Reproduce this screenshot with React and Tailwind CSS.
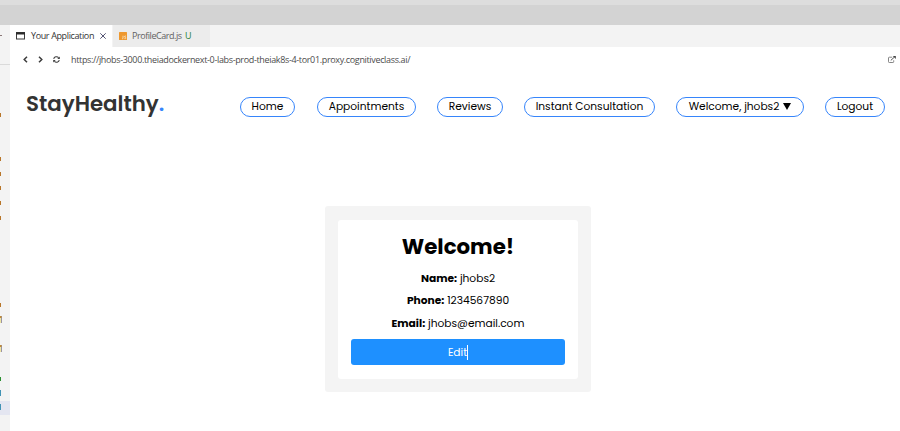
const navItems = [
  { label: 'Home', box: 'w-[55px]' },
  { label: 'Appointments', box: 'w-[99px] ml-[22px]' },
  { label: 'Reviews', box: 'w-[66px] ml-[21px]' },
  { label: 'Instant Consultation', box: 'w-[131px] ml-[21px]' },
  { label: 'Welcome, jhobs2', box: 'w-[128px] ml-[21px]', arrow: true },
  { label: 'Logout', box: 'w-[60px] ml-[21px]' },
];

const treeRows = [
  'dot', '', '', 'dot', 'dot', 'dot', 'dot', 'dot', '', '', '', '', '',
  'dot', 'M', '', 'M', '', 'green', 'U', 'U',
];

function TreeMark({ kind }) {
  if (kind === 'dot') return <i className="block h-[4px] w-[1px] bg-[#b8762a]" />;
  if (kind === 'green') return <i className="block h-[4px] w-[1px] bg-[#2a9030]" />;
  if (kind === 'M')
    return (
      <svg width="2" height="7" className="mb-px block">
        <path d="M.5 1v6" stroke="#eee4a0" />
        <path d="M1.5 0v7" stroke="#9994a5" />
        <path d="M0 1h1.5" stroke="#c08a3a" strokeWidth="2" />
      </svg>
    );
  if (kind === 'U') return <i className="mb-px block h-[6px] w-[1px] bg-[#4293b4]" />;
  return null;
}

function Sidebar() {
  return (
    <aside className="w-[10px] shrink-0 overflow-hidden bg-[#f3f3f3]">
      <div className="flex h-[40px] items-start border-b border-[#dadada] pt-[10px]">
        <i className="block h-px w-[2px] bg-[#8a7777]" />
      </div>
      <div className="pt-[43px]">
        {treeRows.map((kind, i) => (
          <div
            key={i}
            className={`flex h-[14.63px] items-center ${i === treeRows.length - 1 ? 'bg-[#e4e6f1]' : ''}`}
          >
            <TreeMark kind={kind} />
          </div>
        ))}
      </div>
    </aside>
  );
}

function Tabs() {
  return (
    <div className="flex h-[22px] bg-[#f3f3f3] text-[9px] leading-[22px]">
      <div className="flex w-[102px] items-center bg-white pl-[6px] text-[#333]">
        <svg width="9" height="8" viewBox="0 0 9 8" className="shrink-0">
          <rect x=".5" y=".5" width="8" height="6.5" fill="#fff" stroke="#3b3b3b" />
          <path d="M0 1.5h9" stroke="#2c2c2c" strokeWidth="2" />
        </svg>
        <span className="ml-[6px] w-[63px] whitespace-nowrap tracking-[-0.37px]">Your Application</span>
        <svg width="6" height="6" viewBox="0 0 6 6" className="ml-[6px] shrink-0">
          <path d="M.3.3l5.4 5.4M5.7.3L.3 5.7" stroke="#424264" strokeWidth=".9" />
        </svg>
      </div>
      <div className="ml-px flex w-[97px] items-center bg-[#ececec] pl-[6px] text-[#616161]">
        <svg width="8" height="8" viewBox="0 0 8 8" className="shrink-0">
          <rect width="8" height="8" rx=".5" fill="#ee982f" />
          <path d="M4 3.7v2.4q0 .8-.9.8M7 4.1q-1.5-.4-1.5.5 0 .6.8.7.8.2.6.9-.2.8-1.5.4" fill="none" stroke="#fff1d8" strokeWidth=".7" />
        </svg>
        <span className="ml-[5px] w-[50px] whitespace-nowrap tracking-[-0.45px]">ProfileCard.js</span>
        <span className="ml-[3px] text-[#278038]">U</span>
      </div>
    </div>
  );
}

function AddressBar() {
  return (
    <div className="flex h-[25px] items-center pr-[4px] pl-[13px] text-[#3c3c3c]">
      <svg width="5" height="7" viewBox="0 0 5 7">
        <path d="M4 .7L1.2 3.5 4 6.3" fill="none" stroke="currentColor" strokeWidth="1.5" />
      </svg>
      <svg width="5" height="7" viewBox="0 0 5 7" className="ml-[10px]">
        <path d="M1 .7l2.8 2.8L1 6.3" fill="none" stroke="currentColor" strokeWidth="1.5" />
      </svg>
      <svg width="7" height="7" viewBox="0 0 7 7" className="ml-[10px]">
        <path d="M.7 2.8A2.8 2.6 0 015.6 1.7M6.3 4.2A2.8 2.6 0 011.4 5.3" fill="none" stroke="currentColor" strokeWidth="1.1" />
        <path d="M6.8.4v2.5H4.3zM.2 6.6V4.1h2.5z" fill="currentColor" />
      </svg>
      <span className="ml-[11px] whitespace-nowrap text-[9px] tracking-[-0.345px] text-[#4c4c4c]">
        https://jhobs-3000.theiadockernext-0-labs-prod-theiak8s-4-tor01.proxy.cognitiveclass.ai/
      </span>
      <svg width="8" height="7" viewBox="0 0 8 7" className="mb-px ml-auto">
        <path d="M4.2 1.2H1.3q-.8 0-.8.8v3.7q0 .8.8.8h3.6q.8 0 .8-.8V4.3" fill="none" stroke="#777" strokeWidth=".9" />
        <path d="M2.8 4.4l3.5-3.2" stroke="#555" />
        <path d="M4.8 0h3v3z" fill="#444" />
      </svg>
    </div>
  );
}

function Field({ label, value }) {
  return (
    <p className="whitespace-nowrap text-[10.67px] leading-[22.4px]">
      <b className="font-bold">{label}:</b> {value}
    </p>
  );
}

export default function App() {
  return (
    <div className="flex h-[431px] w-[900px] flex-col overflow-hidden bg-white font-['Open_Sans','Noto_Sans',sans-serif]">
      <div className="h-[25px] shrink-0 border-t-[5px] border-[#dddddd] bg-[#d3d3d3]" />
      <div className="flex min-h-0 flex-1">
        <Sidebar />
        <main className="min-w-0 flex-1">
          <Tabs />
          <AddressBar />
          <div className="font-['Poppins','Inter',sans-serif] text-black">
            <header className="flex h-[70px] items-center pr-[15px] pl-[16px]">
              <h1 className="mb-[7px] whitespace-nowrap text-[21.33px] font-semibold text-[#333]">
                StayHealthy<span className="text-[#3685fb]">.</span>
              </h1>
              <nav className="ml-auto flex">
                {navItems.map(({ label, box, arrow }) => (
                  <a
                    key={label}
                    className={`flex h-[20px] items-center justify-center whitespace-nowrap rounded-full border border-[#3685fb] pb-px text-[10.67px] ${box}`}
                  >
                    <span>{label}</span>
                    {arrow && (
                      <svg width="8" height="7" viewBox="0 0 8 7" className="ml-[4px]">
                        <path d="M0 0h8L4 7z" />
                      </svg>
                    )}
                  </a>
                ))}
              </nav>
            </header>
            <section className="mt-[64px] ml-[315px] h-[186px] w-[266px] rounded-[3px] bg-[#f4f4f4] px-[13px] pt-[14px]">
              <div className="h-[159px] rounded-[3px] bg-white px-[13px] pt-[11px] text-center">
                <h2 className="mb-[6px] text-[21.33px] leading-[31px] font-bold">Welcome!</h2>
                <Field label="Name" value="jhobs2" />
                <Field label="Phone" value="1234567890" />
                <Field label="Email" value="jhobs@email.com" />
                <button className="mt-[3.8px] flex h-[26px] w-full items-center justify-center rounded-[3px] bg-[#1e90ff] text-[10.67px] text-white">
                  <span className="flex h-[15px] items-center border-r border-white pt-px">Edit</span>
                </button>
              </div>
            </section>
          </div>
        </main>
      </div>
    </div>
  );
}
